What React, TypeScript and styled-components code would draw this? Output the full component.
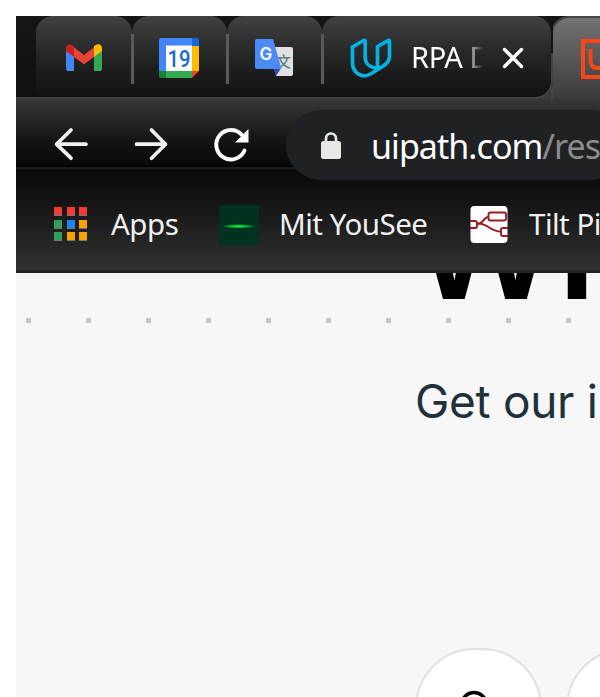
import React from "react";
import styled, { createGlobalStyle } from "styled-components";

const Global = createGlobalStyle`
  * { box-sizing: border-box; }
  html, body { margin: 0; background: #fff; height: 100%; overflow: hidden; }
  svg { display: block; flex: none; overflow: visible; }
`;

const Page = styled.div`
  width: 600px;
  height: 697px;
  padding: 16px 0 0 16px;
  overflow: hidden;
  background: #fff;
`;

const Browser = styled.div`
  width: 584px;
  height: 681px;
  overflow: hidden;
  font-family: "Noto Sans", "Open Sans", sans-serif;
`;

const TabStrip = styled.div`
  display: flex;
  height: 83px;
  background: linear-gradient(#151515 0 45px, #3f3f3f 45px, #393939);
  overflow: hidden;
`;

const TabGroup = styled.div`
  display: flex;
  flex: none;
  position: relative;
  width: 537px;
  height: 83px;
  padding-left: 20px;
  border-bottom: 2px solid #424242;
  border-radius: 0 0 18px 0;
  background: linear-gradient(#151515, #101010);
  &::after {
    content: "";
    position: absolute;
    right: 0;
    bottom: -2px;
    width: 22px;
    height: 44px;
    border: solid #424242;
    border-width: 0 2px 2px 0;
    border-radius: 0 0 18px 0;
  }
`;

const Tab = styled.div<{ $width: number; $pad: number; $last?: boolean }>`
  display: flex;
  align-items: center;
  flex: none;
  position: relative;
  width: ${(p) => p.$width}px;
  height: 81px;
  padding: 2px 0 0 ${(p) => p.$pad}px;
  border-radius: 17px 17px ${(p) => (p.$last ? "17px" : "0")} 0;
  background: linear-gradient(#414141, #262626 48%, #111 98%);
`;

const TabSeam = styled.div`
  position: absolute;
  top: 18px;
  right: -2px;
  z-index: 1;
  width: 3px;
  height: 50px;
  background: #5a5a5a;
`;

const TabTitle = styled.div`
  width: 73px;
  margin: -2px 19px 0 20px;
  overflow: hidden;
  white-space: nowrap;
  font-size: 29px;
  line-height: 40px;
  letter-spacing: -0.4px;
  color: #fff;
  mask-image: linear-gradient(90deg, #000 54px, transparent 72px);
`;

const ActiveTab = styled.div`
  display: flex;
  align-items: center;
  flex: none;
  width: 80px;
  height: 83px;
  margin-left: -2px;
  padding-left: 28px;
  border-top: 2px solid #454545;
  border-left: 2px solid #454545;
  border-radius: 18px 0 0 0;
  background: linear-gradient(#737373, #575757 50%, #3a3a3a);
`;

const Toolbar = styled.div`
  display: flex;
  height: 70px;
  padding-left: 36px;
  background: linear-gradient(#373737, #252525 32%, #111 65%, #090909 94%, #000 95% 97%, #202020 98%);
`;

const NavButtons = styled.div`
  display: flex;
  flex: none;
  gap: 43px;
  width: 234px;
  padding-top: 18px;
  height: 70px;
`;

const AddressBar = styled.div`
  display: flex;
  align-items: center;
  flex: none;
  position: relative;
  width: 340px;
  height: 70px;
  margin-top: 11px;
  padding-left: 34px;
  border-radius: 35px;
  background: #202124;
`;

const Url = styled.div`
  margin: 2px 0 0 29px;
  font-size: 34px;
  line-height: 48px;
  letter-spacing: -0.95px;
  white-space: nowrap;
  color: #fff;
`;

const UrlPath = styled.span`
  color: #8b8c8e;
`;

const Bookmarks = styled.div`
  display: flex;
  align-items: center;
  height: 104px;
  padding: 8px 0 0 38px;
  border-bottom: 3px solid #242424;
  background: linear-gradient(#090909, #111 24%, #303030);
`;

const Bookmark = styled.div<{ $width: number; $gap: number }>`
  display: flex;
  align-items: center;
  flex: none;
  width: ${(p) => p.$width}px;
  gap: ${(p) => p.$gap}px;
  font-size: 29.5px;
  line-height: 40px;
  letter-spacing: -0.5px;
  white-space: nowrap;
  color: #f0f0f0;
`;

const AppGrid = styled.div`
  display: grid;
  grid-template-columns: repeat(3, 8px);
  gap: 4.5px;
`;

const AppDot = styled.div<{ $color: string }>`
  height: 8px;
  background: ${(p) => p.$color};
  box-shadow: 0 1px 0 #777;
`;

const Content = styled.div`
  height: 424px;
  overflow: hidden;
  background: #f7f7f7;
`;

const Headline = styled.div`
  height: 45px;
  padding-left: 395px;
  font: 600 145px/142px Inter, sans-serif;
  letter-spacing: -1px;
  white-space: nowrap;
  color: #000;
  overflow: hidden;
  & > span { display: block; margin-top: -97px; }
`;

const DotRow = styled.div`
  display: flex;
  gap: 55px;
  height: 5px;
  padding-left: 10px;
`;

const Dot = styled.div`
  flex: none;
  width: 5px;
  height: 5px;
  background: #c6c6c6;
`;

const Intro = styled.div`
  height: 60px;
  margin: 48px 0 0 399px;
  font: 400 46px/60px Inter, sans-serif;
  letter-spacing: -0.3px;
  white-space: nowrap;
  color: #21313c;
`;

const Cards = styled.div`
  display: flex;
  gap: 24px;
  margin: 217px 0 0 399px;
`;

const Card = styled.div`
  display: flex;
  justify-content: center;
  flex: none;
  width: 127px;
  height: 127px;
  padding: 41px 9px 0 0;
  border: 2px solid #e0e0e0;
  border-radius: 60px;
  background: #fff;
`;

const Gmail = () => (
  <svg width="36" height="27" viewBox="0 0 36 27">
    <path d="M0 5h8v22H2q-2 0-2-2z" fill="#4285f4" />
    <path d="M28 5h8v20q0 2-2 2h-6z" fill="#34a853" />
    <path d="M8 3.2 18 11 28 3.2V13L18 20.2 8 13z" fill="#ea4335" />
    <path d="M0 4C0 .2 4-1 7 1.4l1 .8V13L0 7z" fill="#c5221f" />
    <path d="M36 4c0-3.8-4-5-7-2.6l-1 .8V13l8-6z" fill="#fbbc04" />
  </svg>
);

const CalendarText = styled.text`
  font: 500 23.5px Roboto, sans-serif;
  fill: #1967d2;
`;

const Calendar = () => (
  <svg width="40" height="40" viewBox="0 0 40 40">
    <path d="M2 0h31v8H8v25H0V2q0-2 2-2z" fill="#4285f4" />
    <path d="M33 0h5q2 0 2 2v6h-7z" fill="#1967d2" />
    <path d="M33 8h7v25h-7z" fill="#fbbc04" />
    <path d="M7 33h26v7H7z" fill="#34a853" />
    <path d="M0 33h7v7H2q-2 0-2-2z" fill="#188038" />
    <path d="M33 33h7l-7 7z" fill="#ea4335" />
    <path d="M7 7.500h26V33H7z" fill="#fff" />
    <CalendarText x="8.500" y="28.500" textLength="23" lengthAdjust="spacingAndGlyphs">19</CalendarText>
  </svg>
);

const GlyphText = styled.text`
  font: 600 17px Inter, sans-serif;
  fill: #fff;
`;

const ForeignText = styled.text`
  font: 500 15px "Noto Sans CJK SC", sans-serif;
  fill: #607d8b;
`;

const Translate = () => (
  <svg width="38" height="38" viewBox="0 0 38 38">
    <path d="M17 8h19q2 0 2 2v25q0 2-2 2H21z" fill="#e1e1e1" />
    <ForeignText x="21" y="27.500">文</ForeignText>
    <path d="M18.500 30h7L21 37z" fill="#3949ab" />
    <path d="M2 0h16l8.500 30H2q-2 0-2-2V2q0-2 2-2z" fill="#4c8bf5" />
    <GlyphText x="4.500" y="21">G</GlyphText>
  </svg>
);

const Udacity = () => (
  <svg width="41" height="40" viewBox="0 0 41 40" fill="none" stroke="#02b3e4" strokeWidth="3.700" strokeLinejoin="round" strokeLinecap="round">
    <path d="M2.500 9 13.500 2.500q1.700-.8 1.700 1V19c0 6 4 10.500 11 11" />
    <path d="M2.500 9v15c0 12 10 16.500 18 12l12-7.500c5-3 7-6 7-10V3.500q0-1.700-1.500-.9L27.500 8.500V30" />
  </svg>
);

const Close = () => (
  <svg width="20" height="20" viewBox="0 0 20 20" stroke="#fff" strokeWidth="3.400" strokeLinecap="round">
    <path d="m1.500 1.500 17 17m0-17-17 17" />
  </svg>
);

const UiPath = () => (
  <svg width="40" height="40" viewBox="0 0 40 40" fill="none" stroke="#fa4616" strokeWidth="4">
    <path d="M2 2h36v36H2z" />
    <path d="M9.500 10v11c0 5 2 8 7 8s7-3 7-8V10" />
  </svg>
);

const Arrow = ({ forward = false }: { forward?: boolean }) => (
  <svg width="37" height="52" viewBox="0 0 37 52" fill="none" stroke="#f1f1f2" strokeWidth="3.700" strokeLinecap="round" strokeLinejoin="round">
    <path d={forward ? "M4.500 27.200h29M19.500 13l14 14.200-14 14" : "M34 27.200H5M19 13 4.500 27.200 19 41.200"} />
  </svg>
);

const Reload = () => (
  <svg width="37" height="52" viewBox="0 0 37 52">
    <path d="M32.500 33.500A14.700 14.700 0 1 1 30 18" fill="none" stroke="#fff" strokeWidth="3.900" strokeLinecap="round" />
    <path d="M36.500 12v13.500H23z" fill="#fff" />
  </svg>
);

const Lock = () => (
  <svg width="22" height="29" viewBox="0 0 22 29">
    <path d="M6 12V7.500a5 5 0 0 1 10 0V12" fill="none" stroke="#e8e8e8" strokeWidth="2.700" />
    <rect x="1" y="10" width="20" height="18" rx="2.500" fill="#e8e8e8" />
  </svg>
);

const YouSee = () => (
  <svg width="40" height="40" viewBox="0 0 40 40">
    <defs>
      <radialGradient id="glow">
        <stop stopColor="#35f03d" />
        <stop offset=".4" stopColor="#00c92e" />
        <stop offset="1" stopColor="#00331f" />
      </radialGradient>
    </defs>
    <path d="M0 1h40v40H0z" fill="#00331f" />
    <ellipse cx="19.500" cy="22.300" rx="17" ry="2.200" fill="url(#glow)" />
  </svg>
);

const Tilt = () => (
  <svg width="38" height="38" viewBox="0 0 38 38" fill="none" stroke="#981b20" strokeWidth="1.900">
    <rect x=".5" y="1" width="37" height="37" rx="4" fill="#fff" stroke="none" />
    <rect x="18.500" y="7.500" width="17.500" height="8" rx="2" />
    <path d="M0 16h5q2 0 2 2v3q0 2-2 2H0M38 23h-5q-2 0-2 2v4q0 2 2 2h5" />
    <path d="M7 19c6 1 6-7 11.500-7M7 18.500c11-1 12 8 24 8" />
  </svg>
);

const Search = () => (
  <svg width="30" height="30" viewBox="0 0 30 30">
    <circle cx="15" cy="14" r="12.500" fill="none" stroke="#000" strokeWidth="3.400" />
  </svg>
);

const appColors = ["#f23b33", "#f23b33", "#f23b33", "#30a058", "#1a86f5", "#f5a400", "#30a058", "#f5a400", "#f5a400"];

export default function App() {
  return (
    <>
      <Global />
      <Page>
        <Browser>
          <TabStrip>
            <TabGroup>
              <Tab $width={96} $pad={30}><Gmail /><TabSeam /></Tab>
              <Tab $width={95} $pad={27}><Calendar /><TabSeam /></Tab>
              <Tab $width={95} $pad={28}><Translate /><TabSeam /></Tab>
              <Tab $width={229} $pad={28} $last>
                <Udacity />
                <TabTitle>RPA D</TabTitle>
                <Close />
              </Tab>
            </TabGroup>
            <ActiveTab><UiPath /></ActiveTab>
          </TabStrip>
          <Toolbar>
            <NavButtons><Arrow /><Arrow forward /><Reload /></NavButtons>
            <AddressBar>
              <Lock />
              <Url>uipath.com<UrlPath>/resources</UrlPath></Url>
            </AddressBar>
          </Toolbar>
          <Bookmarks>
            <Bookmark $width={165} $gap={24}>
              <AppGrid>{appColors.map((color, i) => <AppDot key={i} $color={color} />)}</AppGrid>
              <span>Apps</span>
            </Bookmark>
            <Bookmark $width={251} $gap={20}><YouSee /><span>Mit YouSee</span></Bookmark>
            <Bookmark $width={180} $gap={21}><Tilt /><span>Tilt Pi</span></Bookmark>
          </Bookmarks>
          <Content>
            <Headline><span>Wh</span></Headline>
            <DotRow>{Array.from({ length: 10 }, (_, i) => <Dot key={i} />)}</DotRow>
            <Intro>Get our in</Intro>
            <Cards><Card><Search /></Card><Card /></Cards>
          </Content>
        </Browser>
      </Page>
    </>
  );
}
